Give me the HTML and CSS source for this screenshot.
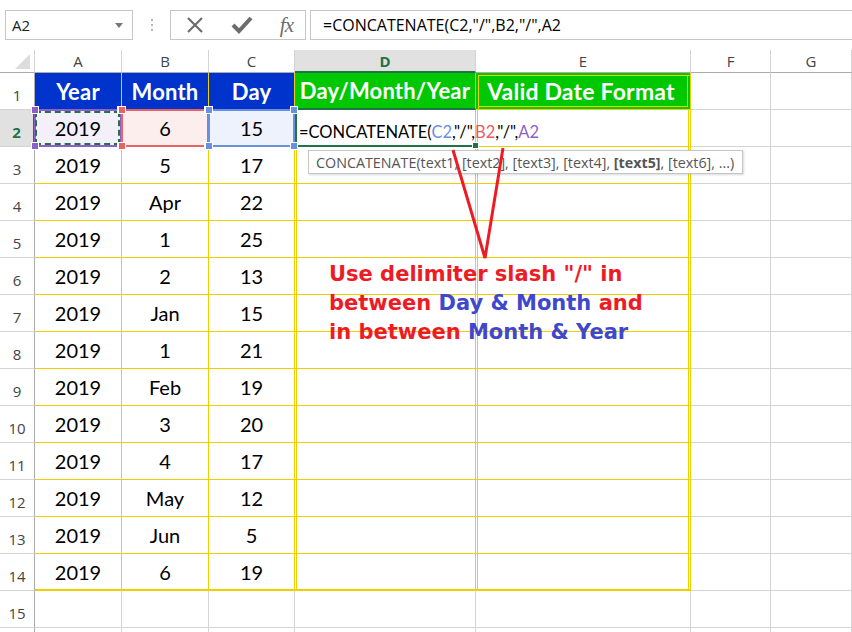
FILE: index.html
```html
<!DOCTYPE html>
<html>
<head>
    <title>CONCATENATE date</title>
    <link rel="stylesheet" href="styles.css">
</head>
<body>
    <div class="toolbar">
        <div class="namebox"><span>A2</span><span class="drop"></span></div>
        <div class="grip"><i></i><i></i><i></i></div>
        <div class="fx-buttons">
            <svg width="20" height="20" viewBox="0 0 20 20"><path d="M3 3 L17 17 M17 3 L3 17" stroke="#6d6d6d" stroke-width="2.2" fill="none"/></svg>
            <svg width="22" height="20" viewBox="0 0 22 20"><path d="M2 10 L8 16 L20 3" stroke="#6d6d6d" stroke-width="4" fill="none"/></svg>
            <span class="fx">fx</span>
        </div>
        <div class="formula">=CONCATENATE(C2,"/",B2,"/",A2</div>
    </div>

    <div class="sheet">
        <div class="grid">
            <div class="corner"><span class="tri"></span></div>
            <div class="colhead">A</div>
            <div class="colhead">B</div>
            <div class="colhead">C</div>
            <div class="colhead active">D</div>
            <div class="colhead">E</div>
            <div class="colhead">F</div>
            <div class="colhead">G</div>

            <div class="rownum">1</div>
            <div class="cell tbl title blue">Year</div>
            <div class="cell tbl title blue">Month</div>
            <div class="cell tbl title blue">Day</div>
            <div class="cell tbl title green col-d d1">Day/Month/Year</div>
            <div class="cell tbl title green col-e e1">Valid Date Format</div>
            <div class="cell"></div>
            <div class="cell"></div>

            <div class="rownum active">2</div>
            <div class="cell tbl ref ref-a">2019<b class="h tl"></b><b class="h tr"></b><b class="h bl"></b><b class="h br"></b></div>
            <div class="cell tbl ref ref-b">6<b class="h tl"></b><b class="h tr"></b><b class="h bl"></b><b class="h br"></b></div>
            <div class="cell tbl ref ref-c">15<b class="h tl"></b><b class="h tr"></b><b class="h bl"></b><b class="h br"></b></div>
            <div class="cell tbl col-d editing"><span>=CONCATENATE(<span class="c-ref">C2</span>,"/",<span class="b-ref">B2</span>,"/",<span class="a-ref">A2</span></span><b class="fill"></b></div>
            <div class="cell tbl col-e"></div>
            <div class="cell"></div>
            <div class="cell"></div>

            <div class="rownum">3</div>
            <div class="cell tbl">2019</div><div class="cell tbl">5</div><div class="cell tbl">17</div>
            <div class="cell tbl col-d"></div><div class="cell tbl col-e"></div><div class="cell"></div><div class="cell"></div>

            <div class="rownum">4</div>
            <div class="cell tbl">2019</div><div class="cell tbl">Apr</div><div class="cell tbl">22</div>
            <div class="cell tbl col-d"></div><div class="cell tbl col-e"></div><div class="cell"></div><div class="cell"></div>

            <div class="rownum">5</div>
            <div class="cell tbl">2019</div><div class="cell tbl">1</div><div class="cell tbl">25</div>
            <div class="cell tbl col-d"></div><div class="cell tbl col-e"></div><div class="cell"></div><div class="cell"></div>

            <div class="rownum">6</div>
            <div class="cell tbl">2019</div><div class="cell tbl">2</div><div class="cell tbl">13</div>
            <div class="cell tbl col-d"></div><div class="cell tbl col-e"></div><div class="cell"></div><div class="cell"></div>

            <div class="rownum">7</div>
            <div class="cell tbl">2019</div><div class="cell tbl">Jan</div><div class="cell tbl">15</div>
            <div class="cell tbl col-d"></div><div class="cell tbl col-e"></div><div class="cell"></div><div class="cell"></div>

            <div class="rownum">8</div>
            <div class="cell tbl">2019</div><div class="cell tbl">1</div><div class="cell tbl">21</div>
            <div class="cell tbl col-d"></div><div class="cell tbl col-e"></div><div class="cell"></div><div class="cell"></div>

            <div class="rownum">9</div>
            <div class="cell tbl">2019</div><div class="cell tbl">Feb</div><div class="cell tbl">19</div>
            <div class="cell tbl col-d"></div><div class="cell tbl col-e"></div><div class="cell"></div><div class="cell"></div>

            <div class="rownum">10</div>
            <div class="cell tbl">2019</div><div class="cell tbl">3</div><div class="cell tbl">20</div>
            <div class="cell tbl col-d"></div><div class="cell tbl col-e"></div><div class="cell"></div><div class="cell"></div>

            <div class="rownum">11</div>
            <div class="cell tbl">2019</div><div class="cell tbl">4</div><div class="cell tbl">17</div>
            <div class="cell tbl col-d"></div><div class="cell tbl col-e"></div><div class="cell"></div><div class="cell"></div>

            <div class="rownum">12</div>
            <div class="cell tbl">2019</div><div class="cell tbl">May</div><div class="cell tbl">12</div>
            <div class="cell tbl col-d"></div><div class="cell tbl col-e"></div><div class="cell"></div><div class="cell"></div>

            <div class="rownum">13</div>
            <div class="cell tbl">2019</div><div class="cell tbl">Jun</div><div class="cell tbl">5</div>
            <div class="cell tbl col-d"></div><div class="cell tbl col-e"></div><div class="cell"></div><div class="cell"></div>

            <div class="rownum">14</div>
            <div class="cell tbl last">2019</div><div class="cell tbl last">6</div><div class="cell tbl last">19</div>
            <div class="cell tbl last col-d"></div><div class="cell tbl last col-e"></div><div class="cell"></div><div class="cell"></div>

            <div class="rownum">15</div>
            <div class="cell"></div><div class="cell"></div><div class="cell"></div>
            <div class="cell"></div><div class="cell"></div><div class="cell"></div><div class="cell"></div>

            <div class="rownum"></div>
            <div class="cell"></div><div class="cell"></div><div class="cell"></div>
            <div class="cell"></div><div class="cell"></div><div class="cell"></div><div class="cell"></div>
        </div>

        <div class="tooltip"><span>CONCATENATE(text1, [text2], [text3], [text4], <b>[text5]</b>, [text6], ...)</span></div>

        <svg class="arrows" width="852" height="582" viewBox="0 0 852 582">
            <path d="M453 100 L485 208 L503 98" stroke="#ed1c24" stroke-width="3" fill="none"/>
        </svg>

        <div class="note">
            Use delimiter slash "/" in<br>
            between <span class="blue-txt">Day &amp; Month</span> and<br>
            in between <span class="blue-txt">Month &amp; Year</span>
        </div>
    </div>
</body>
</html>
```

FILE: styles.css
```css
body {
    margin: 0;
    background-color: #fff;
    font-family: Lato, sans-serif;
    overflow: hidden;
}

/* formula bar */
.toolbar {
    height: 50px;
    display: flex;
    align-items: center;
    padding-left: 5px;
    box-sizing: border-box;
}

.namebox {
    width: 128px;
    height: 30px;
    border: 1px solid #c6c6c6;
    box-sizing: border-box;
    display: flex;
    align-items: center;
    justify-content: space-between;
    padding: 0 9px 0 6px;
    font-family: "Open Sans", sans-serif;
    font-size: 15px;
    color: #222;
}

.drop {
    width: 0;
    height: 0;
    border-left: 4px solid transparent;
    border-right: 4px solid transparent;
    border-top: 5px solid #777;
}

.grip {
    width: 37px;
    display: flex;
    flex-direction: column;
    align-items: center;
    gap: 3px;
}

.grip i {
    width: 2px;
    height: 2px;
    background-color: #b4b4b4;
}

.fx-buttons {
    width: 136px;
    height: 30px;
    border: 1px solid #c6c6c6;
    box-sizing: border-box;
    display: flex;
    align-items: center;
    justify-content: space-between;
    padding: 0 12px 0 14px;
}

.fx {
    font-family: "Liberation Serif", serif;
    font-style: italic;
    font-size: 21px;
    color: #6d6d6d;
    letter-spacing: -1px;
}

.formula {
    flex: 1;
    height: 30px;
    margin-left: 4px;
    border: 1px solid #c6c6c6;
    border-right: none;
    box-sizing: border-box;
    padding-left: 12px;
    display: flex;
    align-items: center;
    font-family: "Open Sans", sans-serif;
    font-size: 16px;
    color: #000;
}

/* sheet */
.sheet {
    position: relative;
}

.grid {
    display: grid;
    grid-template-columns: 35px 87px 87px 86px 181px 215px 80px 81px;
    grid-template-rows: 23px repeat(15, 37px) 8px;
}

.corner {
    border-right: 1px solid #d4d4d4;
    border-bottom: 1px solid #ababab;
    display: flex;
    align-items: flex-end;
    justify-content: flex-end;
    padding: 0 4px 3px 0;
}

.tri {
    width: 0;
    height: 0;
    border-left: 15px solid transparent;
    border-bottom: 15px solid #dcdcdc;
}

.colhead {
    border-right: 1px solid #d4d4d4;
    border-bottom: 1px solid #ababab;
    display: flex;
    align-items: center;
    justify-content: center;
    font-family: "Open Sans", sans-serif;
    font-size: 15px;
    color: #444;
}

.colhead.active {
    background-color: #e1e1e1;
    border-bottom: 2px solid #217346;
    color: #217346;
    font-weight: bold;
}

.rownum {
    border-right: 1px solid #ababab;
    border-bottom: 1px solid #d4d4d4;
    display: flex;
    align-items: flex-end;
    justify-content: center;
    padding-bottom: 4px;
    box-sizing: border-box;
    font-family: "Open Sans", sans-serif;
    font-size: 15px;
    color: #444;
}

.rownum.active {
    background-color: #e1e1e1;
    border-right: 2px solid #217346;
    color: #217346;
    font-weight: bold;
}

.cell {
    border-right: 1px solid #d4d4d4;
    border-bottom: 1px solid #d4d4d4;
    display: flex;
    align-items: center;
    justify-content: center;
    font-size: 20px;
    color: #000;
    white-space: nowrap;
}

.tbl {
    border-color: #f0cf00;
}

.tbl.last {
    border-bottom: 2px solid #f0cf00;
}

.col-d {
    box-shadow: inset 1px 0 0 #fff, inset 2px 0 0 #f0cf00;
}

.col-e {
    box-shadow: inset 1px 0 0 #fff, inset 2px 0 0 #f0cf00, inset -1px 0 0 #fff, inset -2px 0 0 #f0cf00;
}

.title {
    color: #fff;
    font-weight: bold;
    font-size: 22px;
    letter-spacing: 0.2px;
}

.blue {
    background-color: #0033cc;
}

.green {
    background-color: #00c800;
}

.d1 {
    border-bottom: 2px solid #217346;
    box-shadow: none;
}

.e1 {
    box-shadow: inset 2px 2px 0 #00c800, inset 3px 3px 0 #f0cf00, inset -2px -2px 0 #00c800, inset -3px -3px 0 #f0cf00;
    font-size: 23px;
    padding-right: 4px;
}

/* references highlighted by the formula */
.ref {
    position: relative;
}

.ref::before {
    content: "";
    position: absolute;
    top: -1px;
    left: -1px;
    right: -1px;
    bottom: -1px;
    border: 2px solid var(--ref);
}

.ref-a {
    --ref: #8e5fc8;
    background-color: #f3f0fa;
}

.ref-a::after {
    content: "";
    position: absolute;
    top: 1px;
    left: 0;
    right: 1px;
    bottom: 1px;
    border: 2px dashed #217346;
}

.ref-b {
    --ref: #e86464;
    background-color: #fdeeee;
}

.ref-c {
    --ref: #6a90e0;
    background-color: #eef2fc;
}

.h {
    position: absolute;
    width: 6px;
    height: 6px;
    background-color: var(--ref);
    border: 1px solid #fff;
    z-index: 2;
}

.h.tl { top: -4px; left: -4px; }
.h.tr { top: -4px; right: -4px; }
.h.bl { bottom: -4px; left: -4px; }
.h.br { bottom: -4px; right: -4px; }

.editing {
    position: relative;
    justify-content: flex-start;
    align-items: flex-end;
    padding: 0 0 3px 2px;
    font-size: 16.5px;
    border-left: 2px solid #217346;
    border-bottom: 2px solid #217346;
    box-shadow: none;
    z-index: 1;
}

.c-ref { color: #6a8fe0; }
.b-ref { color: #e85c5c; }
.a-ref { color: #8e5fc8; }

.fill {
    position: absolute;
    right: -4px;
    bottom: -4px;
    width: 5px;
    height: 5px;
    background-color: #217346;
    border: 1px solid #fff;
}

/* overlays */
.tooltip {
    position: absolute;
    left: 308px;
    top: 100px;
    width: 435px;
    height: 24px;
    box-sizing: border-box;
    border: 1px solid #c6c6c6;
    background-color: #fff;
    box-shadow: 1px 1px 2px rgba(0, 0, 0, 0.15);
    padding-left: 7px;
    display: flex;
    align-items: center;
    font-family: "Open Sans", sans-serif;
    font-size: 14.3px;
    color: #555;
    white-space: nowrap;
    z-index: 3;
}

.arrows {
    position: absolute;
    left: 0;
    top: 0;
    z-index: 4;
}

.note {
    position: absolute;
    left: 329px;
    top: 210px;
    font-family: "DejaVu Sans", sans-serif;
    font-weight: bold;
    font-size: 21px;
    line-height: 29px;
    color: #ed1c24;
    white-space: nowrap;
    z-index: 4;
}

.blue-txt {
    color: #3f48cc;
}
```
